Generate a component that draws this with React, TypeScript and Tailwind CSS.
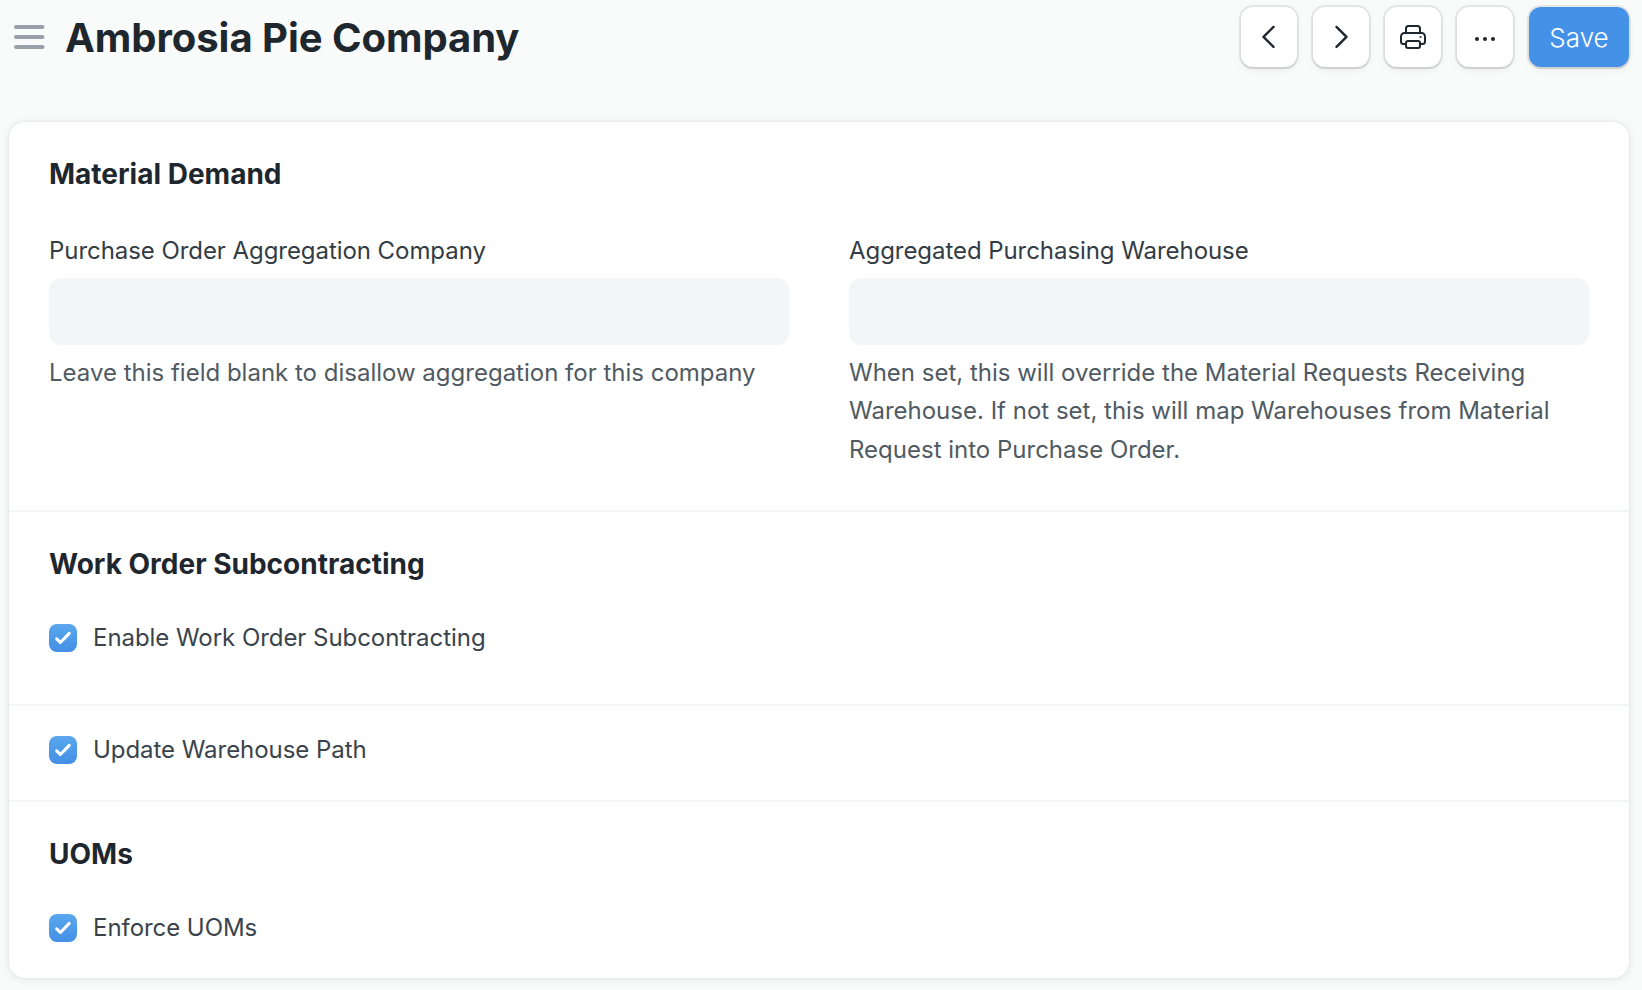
import type { ReactNode } from "react";

const buttonShadow =
  "shadow-[0_0_0_2px_rgba(0,0,0,0.08),0_2px_2px_rgba(0,0,0,0.08),0_4px_8px_rgba(0,0,0,0.04)]";

function IconButton({ label, children }: { label: string; children: ReactNode }) {
  return (
    <button
      aria-label={label}
      className={`flex h-[60px] w-14 items-center justify-center rounded-xl bg-white text-[#1f272e] ${buttonShadow}`}
    >
      {children}
    </button>
  );
}

function Chevron({ d }: { d: string }) {
  return (
    <svg width="32" height="32" viewBox="0 0 32 32" fill="none" stroke="currentColor" strokeWidth="2.4" strokeLinecap="round" strokeLinejoin="round">
      <path d={d} />
    </svg>
  );
}

function SectionTitle({ children }: { children: ReactNode }) {
  return <h2 className="text-[28px] font-bold leading-10 text-[#1f272e]">{children}</h2>;
}

function Field({ label, description }: { label: string; description: string }) {
  return (
    <div className="flex-1">
      <label className="block text-2xl leading-[38px] tracking-[-0.06px] text-[#333c44]">{label}</label>
      <div className="mt-2 h-[67px] rounded-xl bg-[#f4f5f6]" />
      <p className="mt-[9px] text-2xl leading-[38.4px] text-[#505a62]">{description}</p>
    </div>
  );
}

function Check({ label }: { label: string }) {
  return (
    <label className="flex h-[38px] items-center gap-4 text-2xl leading-[38px] tracking-[-0.05px] text-[#3a434b]">
      <span className="flex size-7 items-center justify-center rounded-lg bg-linear-to-b from-[#5aa7ee] to-[#438fe6]">
        <svg width="28" height="28" viewBox="0 0 28 28" fill="none" stroke="white" strokeWidth="3.1" strokeLinecap="round" strokeLinejoin="round">
          <path d="M7.7 14.8 11.4 18.5 20.2 9.4" />
        </svg>
      </span>
      {label}
    </label>
  );
}

export default function App() {
  return (
    <div className="h-[990px] w-[1642px] overflow-hidden bg-[#f9fafa] font-['Inter',sans-serif]">
      <header className="flex h-[122px] items-start justify-between pt-[7px] pl-[14px] pr-[13px]">
        <div className="flex h-[60px] items-center">
          <svg width="31" height="24" viewBox="0 0 31 24" fill="none" stroke="#98a1a9" strokeWidth="4" strokeLinecap="round">
            <path d="M2 2h26.5M2 12h26.5M2 22h26.5" />
          </svg>
          <h1 className="ml-5 pt-0.5 text-[40px] font-bold leading-[60px] tracking-[-0.04px] text-[#1f272e]">Ambrosia Pie Company</h1>
        </div>
        <div className="flex gap-4">
          <IconButton label="Previous">
            <Chevron d="M20.5 5.9 10.5 15.9 20.5 25.9" />
          </IconButton>
          <IconButton label="Next">
            <Chevron d="M11.5 5.9 21.5 15.9 11.5 25.9" />
          </IconButton>
          <IconButton label="Print">
            <svg width="32" height="32" viewBox="0 0 32 32" fill="none" stroke="currentColor" strokeWidth="2" strokeLinecap="round" strokeLinejoin="round">
              <path d="M9 12V7.5a2.5 2.5 0 0 1 2.5-2.5h9a2.5 2.5 0 0 1 2.5 2.5V12" />
              <path d="M9 23H6.5A2.5 2.5 0 0 1 4 20.5V15.5A3.5 3.5 0 0 1 7.5 12h17a3.5 3.5 0 0 1 3.5 3.5v5a2.5 2.5 0 0 1-2.5 2.5H23" />
              <rect x="9" y="20" width="14" height="7" rx="2" />
              <path d="M23.5 16v.01" />
            </svg>
          </IconButton>
          <IconButton label="More">
            <svg width="32" height="32" viewBox="0 0 32 32" fill="currentColor">
              <circle cx="8" cy="18" r="2" />
              <circle cx="16" cy="18" r="2" />
              <circle cx="24" cy="18" r="2" />
            </svg>
          </IconButton>
          <button className={`h-[60px] w-[100px] rounded-xl bg-[#4492e8] pt-0.5 text-[26px] font-light leading-[58px] text-white ${buttonShadow}`}>
            Save
          </button>
        </div>
      </header>

      <main className="mr-[13px] ml-[9px] divide-y-2 divide-[#f4f5f6] rounded-2xl bg-white shadow-[0_0_2px_rgba(0,0,0,0.08),0_1px_8px_rgba(25,39,52,0.10)]">
        <section className="h-[390px] px-10 pt-8">
          <SectionTitle>Material Demand</SectionTitle>
          <div className="mt-[38px] flex gap-[60px]">
            <Field
              label="Purchase Order Aggregation Company"
              description="Leave this field blank to disallow aggregation for this company"
            />
            <Field
              label="Aggregated Purchasing Warehouse"
              description="When set, this will override the Material Requests Receiving Warehouse. If not set, this will map Warehouses from Material Request into Purchase Order."
            />
          </div>
        </section>
        <section className="px-10 pt-8 pb-[47px]">
          <SectionTitle>Work Order Subcontracting</SectionTitle>
          <div className="mt-[35px]">
            <Check label="Enable Work Order Subcontracting" />
          </div>
        </section>
        <section className="px-10 pt-[25px] pb-[31px]">
          <Check label="Update Warehouse Path" />
        </section>
        <section className="px-10 pt-8 pb-[31px]">
          <SectionTitle>UOMs</SectionTitle>
          <div className="mt-[35px]">
            <Check label="Enforce UOMs" />
          </div>
        </section>
      </main>
    </div>
  );
}
